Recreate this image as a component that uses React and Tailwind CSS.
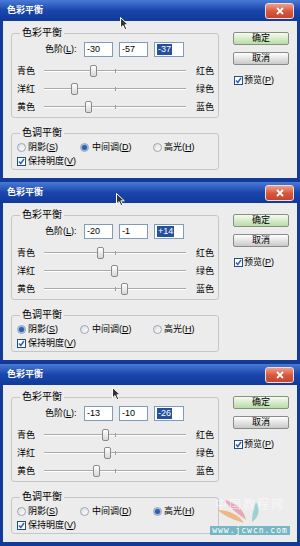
import React from "react";

const panels = [
  { levels: [-30, -57, -37], tone: 1, cursor: { x: 120, y: 17 } },
  { levels: [-20, -1, 14], tone: 0, cursor: { x: 116, y: 11 } },
  { levels: [-13, -10, -26], tone: 2, cursor: { x: 112, y: 23 } },
];

const sliders = [
  ["青色", "红色"],
  ["洋红", "绿色"],
  ["黄色", "蓝色"],
];

const fmt = (v) => (v > 0 ? `+${v}` : `${v}`);

const Check = () => (
  <span className="flex h-[9px] w-[9px] shrink-0 items-center justify-center border border-[#1c5180] bg-white">
    <svg width="7" height="7" viewBox="0 0 7 7">
      <path d="M1 3.5 L2.8 5.5 L6 1" fill="none" stroke="#3d5fb8" strokeWidth="1.6" />
    </svg>
  </span>
);

const Radio = ({ on }) => (
  <span className="flex h-[9px] w-[9px] shrink-0 items-center justify-center rounded-full border border-[#9aa4b0] bg-gradient-to-br from-[#dcdcdc] to-white">
    {on && <span className="h-[5px] w-[5px] rounded-full bg-[#2f5fae] ring-1 ring-[#8fb0e0]" />}
  </span>
);

const Cursor = ({ x, y }) => (
  <svg
    className="absolute"
    style={{ left: x, top: y }}
    width="10"
    height="14"
    viewBox="0 0 10 14"
  >
    <path
      d="M0.5 0.5 L0.5 11 L3 8.6 L5 12.8 L6.8 12 L4.9 7.8 L8.3 7.8 Z"
      fill="#333"
      stroke="#fff"
      strokeWidth="1"
    />
  </svg>
);

const Slider = ({ left, right, value }) => (
  <div className="flex h-[18px] items-center pl-[5px]">
    <span className="w-[27px]">{left}</span>
    <div className="relative h-[12px] w-[142px]">
      <div className="absolute left-0 right-0 top-[5px] h-[2px] border-t border-[#a9a9a9] bg-white" />
      <div className="absolute left-[71px] top-[4px] h-[4px] w-px bg-[#9a9a9a]" />
      <div
        className="absolute top-0 h-[12px] w-[7px] rounded-[2px] border border-[#8a8a8a] bg-gradient-to-b from-white to-[#d8d8d8]"
        style={{ left: 71 + value * 0.71 - 3.5 }}
      />
    </div>
    <span className="ml-[10px]">{right}</span>
  </div>
);

const Panel = ({ levels, tone, cursor }) => (
  <div className="relative flex h-[182px] flex-col">
    <div className="flex h-[21px] shrink-0 items-center justify-between bg-gradient-to-b from-[#4a7ad6] via-[#1a46ad] to-[#103a98] pl-[7px] pr-[6px]">
      <span className="text-[9px] font-bold text-white">色彩平衡</span>
      <div className="flex h-[16px] w-[29px] items-center justify-center rounded-[3px] border border-[#f3dcd6] bg-gradient-to-b from-[#eaa08c] via-[#d9583e] to-[#c4462c]">
        <svg width="8" height="8" viewBox="0 0 8 8">
          <path d="M1 1 L7 7 M7 1 L1 7" stroke="#fff" strokeWidth="1.8" />
        </svg>
      </div>
    </div>
    <div className="flex flex-1 border-x-[3px] border-b-[4px] border-[#123a96] bg-[#ececec] text-[9px] leading-[11px] text-black">
      <div className="flex w-[216px] shrink-0 flex-col pl-[8px]">
        <fieldset className="mt-[7px] min-w-0 w-[208px] rounded-[3px] border border-[#c6c6c6]">
          <legend className="ml-[8px] px-[2px] text-[10px] leading-[10px]">色彩平衡</legend>
          <div className="pb-[1px] pt-[4px]">
            <div className="flex h-[15px] items-center pl-[33px]">
              <span className="w-[39px]">
                色阶(<span className="underline">L</span>):
              </span>
              <div className="flex gap-[6px]">
                {levels.map((v, i) => (
                  <div
                    key={i}
                    className={`flex h-[15px] items-center border border-[#7f9db9] bg-white pl-[2px] ${i === 2 ? "w-[30px]" : "w-[29px]"}`}
                  >
                    <span className={i === 2 ? "bg-[#264f9c] px-px text-white" : ""}>{fmt(v)}</span>
                  </div>
                ))}
              </div>
            </div>
            <div className="mt-[5px] flex flex-col">
              {sliders.map(([l, r], i) => (
                <Slider key={l} left={l} right={r} value={levels[i]} />
              ))}
            </div>
          </div>
        </fieldset>
        <fieldset className="mt-[10px] min-w-0 w-[208px] rounded-[3px] border border-[#c6c6c6]">
          <legend className="ml-[8px] px-[2px] text-[10px] leading-[10px]">色调平衡</legend>
          <div className="flex flex-col gap-px pb-[1px] pl-[5px] pt-[3px]">
            <div className="flex h-[13px] items-center">
              <div className="flex w-[63px] items-center gap-[2px]">
                <Radio on={tone === 0} />
                <span>
                  阴影(<span className="underline">S</span>)
                </span>
              </div>
              <div className="flex w-[73px] items-center gap-[3px]">
                <Radio on={tone === 1} />
                <span>
                  中间调(<span className="underline">D</span>)
                </span>
              </div>
              <div className="flex items-center gap-[2px]">
                <Radio on={tone === 2} />
                <span>
                  高光(<span className="underline">H</span>)
                </span>
              </div>
            </div>
            <div className="flex h-[13px] items-center gap-[2px]">
              <Check />
              <span>
                保持明度(<span className="underline">V</span>)
              </span>
            </div>
          </div>
        </fieldset>
      </div>
      <div className="ml-[14px] flex flex-col pt-[11px]">
        <div className="flex h-[13px] w-[56px] items-center justify-center rounded-[2px] border border-[#8a8f86] bg-gradient-to-b from-[#f4fbef] to-[#b9dca4]">
          确定
        </div>
        <div className="mt-[7px] flex h-[13px] w-[56px] items-center justify-center rounded-[2px] border border-[#8a8a8a] bg-gradient-to-b from-white to-[#c9c9c9]">
          取消
        </div>
        <div className="ml-[1px] mt-[10px] flex h-[11px] items-center gap-[1px]">
          <Check />
          <span>
            预览(<span className="underline">P</span>)
          </span>
        </div>
      </div>
    </div>
    <Cursor x={cursor.x} y={cursor.y} />
  </div>
);

export default function App() {
  return (
    <div className="relative w-[300px] bg-[#123a96] font-['Liberation_Sans','Noto_Sans_CJK_SC',sans-serif]">
      {panels.map((p, i) => (
        <Panel key={i} {...p} />
      ))}
      <div className="pointer-events-none absolute left-[208px] top-[498px] flex w-[84px] flex-col items-center">
        <svg width="60" height="26" viewBox="0 0 60 26" className="absolute left-[8px] top-0 opacity-70">
          <path d="M8 2 C20 4 28 12 30 22 C22 16 14 10 8 2 Z" fill="#e98aa6" />
          <path d="M2 12 C14 12 24 18 28 25 C18 22 8 18 2 12 Z" fill="#f0a25a" />
          <path d="M40 4 C44 10 44 18 36 24 C36 16 38 10 40 4 Z" fill="#7cc7c8" />
        </svg>
        <span className="relative text-[12px] leading-[14px] tracking-[2px] text-white/60">中国教程网</span>
        <span className="relative mt-[14px] bg-[#5aaab9]/80 px-[2px] font-['DejaVu_Sans_Mono',monospace] text-[8px] leading-[9px] tracking-[1px] text-white">
          www.jcwcn.com
        </span>
      </div>
    </div>
  );
}
